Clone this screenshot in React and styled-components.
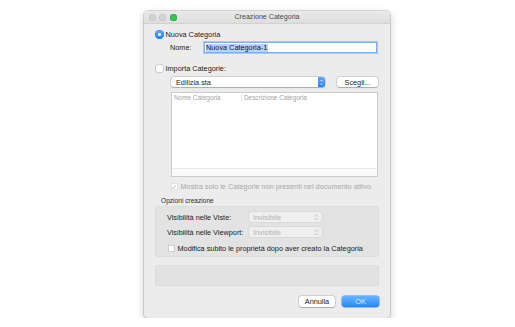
import React from "react";
import styled, { createGlobalStyle } from "styled-components";

const Global = createGlobalStyle`
  html, body { margin: 0; padding: 0; background: #ffffff; }
  body { font-family: "Liberation Sans", Arial, sans-serif; -webkit-font-smoothing: antialiased; }
  * { box-sizing: border-box; }
`;

const Page = styled.div`
  padding: 11px 0 0 144px;
`;

const Window = styled.div`
  width: 246px;
  height: 307px;
  background: #ececec;
  border-radius: 4px;
  box-shadow: 0 0 0 1px rgba(0, 0, 0, 0.13), 0 3px 9px rgba(0, 0, 0, 0.22);
  overflow: hidden;
  display: flex;
  flex-direction: column;
  font-size: 7.3px;
  color: #222;
`;

const TitleBar = styled.div`
  height: 13px;
  flex: none;
  display: grid;
  grid-template-columns: 1fr auto 1fr;
  align-items: center;
  background: linear-gradient(#e9e9e9, #dedede);
  border-bottom: 1px solid #d2d2d2;
`;

const Lights = styled.div`
  display: flex;
  gap: 3.4px;
  padding-left: 5px;
`;

const Light = styled.span`
  width: 7px;
  height: 7px;
  border-radius: 50%;
  background: ${(p) => (p.$on ? "#34c84a" : "#d3d3d3")};
  box-shadow: inset 0 0 0 0.5px ${(p) => (p.$on ? "#26a43a" : "#c2c2c2")};
`;

const Title = styled.div`
  font-size: 7.1px;
  color: #4a4a4a;
  line-height: 12px;
`;

const Content = styled.div`
  flex: 1;
  display: flex;
  flex-direction: column;
  padding: 0 11px 11px;
`;

const RadioRow = styled.div`
  display: flex;
  align-items: center;
  gap: 1.5px;
  height: 9px;
  margin-top: ${(p) => p.$mt}px;
`;

const Radio = styled.span`
  width: 9px;
  height: 9px;
  border-radius: 50%;
  flex: none;
  display: flex;
  align-items: center;
  justify-content: center;
  background: ${(p) => (p.$checked ? "linear-gradient(#66b0fb, #1580fc)" : "#ffffff")};
  box-shadow: ${(p) =>
    p.$checked
      ? "inset 0 0 0 0.5px #2a7fe6"
      : "inset 0 0 0 0.6px #a9a9a9, 0 0.5px 0.5px rgba(0,0,0,0.08)"};
  &::after {
    content: "";
    width: 3px;
    height: 3px;
    border-radius: 50%;
    background: #fff;
    display: ${(p) => (p.$checked ? "block" : "none")};
  }
`;

const FieldRow = styled.div`
  display: flex;
  align-items: center;
  height: 11px;
  margin-top: 3px;
  padding-left: 15px;
`;

const FieldLabel = styled.span`
  width: 34px;
  flex: none;
`;

const TextField = styled.div`
  width: 173px;
  height: 11px;
  background: #fff;
  border: 1px solid #7eaef3;
  box-shadow: 0 0 0 1px #a7c8f6;
  display: flex;
  align-items: center;
  padding-left: 0.5px;
`;

const Selected = styled.span`
  background: #b4d6fe;
  line-height: 8px;
  padding: 0 0.5px;
  color: #111;
`;

const ImportRow = styled.div`
  display: flex;
  align-items: center;
  margin-top: 4px;
  margin-left: 16px;
  height: 10px;
  gap: 12px;
`;

const Popup = styled.div`
  width: ${(p) => p.$w}px;
  height: 10px;
  flex: none;
  border-radius: 2.5px;
  background: ${(p) => (p.$disabled ? "#efefef" : "#ffffff")};
  box-shadow: ${(p) =>
    p.$disabled
      ? "0 0 0 0.6px #cfcfcf"
      : "0 0 0 0.5px rgba(0,0,0,0.22), 0 0.6px 0.8px rgba(0,0,0,0.18)"};
  display: flex;
  align-items: center;
  justify-content: space-between;
  padding-left: ${(p) => (p.$disabled ? 4 : 5)}px;
  color: ${(p) => (p.$disabled ? "#b3b3b3" : "#1e1e1e")};
  overflow: hidden;
`;

const Stepper = styled.span`
  width: 7px;
  height: 10px;
  flex: none;
  border-radius: 0 2.5px 2.5px 0;
  background: ${(p) => (p.$blue ? "linear-gradient(#5ea9fa, #1a7ef8)" : "transparent")};
  display: flex;
  align-items: center;
  justify-content: center;
  margin-right: ${(p) => (p.$blue ? 0 : 2)}px;
`;

const Button = styled.div`
  width: ${(p) => p.$w}px;
  height: ${(p) => p.$h}px;
  flex: none;
  border-radius: 2.5px;
  display: flex;
  align-items: center;
  justify-content: center;
  background: ${(p) => (p.$primary ? "linear-gradient(#6cb4fb, #2289fb)" : "#ffffff")};
  color: ${(p) => (p.$primary ? "#dcecff" : "#222")};
  box-shadow: ${(p) =>
    p.$primary
      ? "0 0 0 0.5px #3b8ef0"
      : "0 0 0 0.5px rgba(0,0,0,0.22), 0 0.6px 0.8px rgba(0,0,0,0.18)"};
`;

const Table = styled.div`
  margin-top: 5px;
  margin-left: 16px;
  width: 207px;
  height: 85px;
  background: #fff;
  border: 1px solid #cbcbcb;
  display: flex;
  flex-direction: column;
`;

const Header = styled.div`
  display: flex;
  height: 9px;
  flex: none;
  font-size: 6.4px;
  color: #a3a3a3;
`;

const HeadCell = styled.div`
  width: ${(p) => (p.$w ? `${p.$w}px` : "auto")};
  flex: ${(p) => (p.$w ? "none" : 1)};
  padding-left: 2px;
  line-height: 9px;
  border-right: ${(p) => (p.$w ? "1px solid #e3e3e3" : "none")};
  margin: 1px 0;
  line-height: 7px;
`;

const TableBody = styled.div`
  flex: 1;
`;

const ScrollStrip = styled.div`
  height: 8px;
  flex: none;
  background: #fafafa;
  border-top: 1px solid #ebebeb;
`;

const CheckRow = styled.div`
  display: flex;
  align-items: center;
  gap: 3px;
  height: 7px;
  margin-top: ${(p) => p.$mt}px;
  margin-left: ${(p) => p.$ml}px;
  color: ${(p) => (p.$disabled ? "#a8a8a8" : "#222")};
`;

const Check = styled.span`
  width: 6.5px;
  height: 6.5px;
  flex: none;
  border-radius: 1.3px;
  background: #fff;
  box-shadow: inset 0 0 0 0.6px ${(p) => (p.$disabled ? "#cacaca" : "#a8a8a8")};
  display: flex;
  align-items: center;
  justify-content: center;
`;

const SectionLabel = styled.div`
  margin-top: 7px;
  height: 8px;
  line-height: 8px;
  padding-left: 6px;
  font-size: 6.6px;
  color: #2a2a2a;
`;

const Group = styled.div`
  margin-top: 1px;
  height: 51px;
  background: #e3e3e3;
  border: 1px solid #dcdcdc;
  border-radius: 3px;
  padding: 5px 0 0 11px;
  display: flex;
  flex-direction: column;
`;

const OptionRow = styled.div`
  display: flex;
  align-items: center;
  height: 10px;
  margin-top: ${(p) => p.$mt}px;
`;

const OptionLabel = styled.span`
  width: 82px;
  flex: none;
  white-space: nowrap;
`;

const StatusBox = styled.div`
  margin-top: 8px;
  height: 21px;
  background: #e2e2e2;
  border: 1px solid #dbdbdb;
  border-radius: 2px;
`;

const ButtonRow = styled.div`
  margin-top: 10px;
  display: flex;
  justify-content: flex-end;
  gap: 7px;
`;

const UpDown = ({ color }) => (
  <svg width="5" height="7" viewBox="0 0 5 7">
    <path d="M1 2.6 L2.5 1.1 L4 2.6" fill="none" stroke={color} strokeWidth="0.8" />
    <path d="M1 4.4 L2.5 5.9 L4 4.4" fill="none" stroke={color} strokeWidth="0.8" />
  </svg>
);

const Tick = ({ color }) => (
  <svg width="6" height="6" viewBox="0 0 6 6">
    <path d="M1.2 3.1 L2.5 4.4 L4.9 1.3" fill="none" stroke={color} strokeWidth="0.9" />
  </svg>
);

export default function App() {
  return (
    <>
      <Global />
      <Page>
        <Window>
          <TitleBar>
            <Lights>
              <Light />
              <Light />
              <Light $on />
            </Lights>
            <Title>Creazione Categoria</Title>
            <span />
          </TitleBar>
          <Content>
            <RadioRow $mt={6}>
              <Radio $checked />
              <span>Nuova Categoria</span>
            </RadioRow>
            <FieldRow>
              <FieldLabel>Nome:</FieldLabel>
              <TextField>
                <Selected>Nuova Categoria-1</Selected>
              </TextField>
            </FieldRow>
            <RadioRow $mt={11}>
              <Radio />
              <span>Importa Categorie:</span>
            </RadioRow>
            <ImportRow>
              <Popup $w={154}>
                <span>Edilizia.sta</span>
                <Stepper $blue>
                  <UpDown color="#ffffff" />
                </Stepper>
              </Popup>
              <Button $w={41} $h={10}>Scegli...</Button>
            </ImportRow>
            <Table>
              <Header>
                <HeadCell $w={70}>Nome Categoria</HeadCell>
                <HeadCell>Descrizione Categoria</HeadCell>
              </Header>
              <TableBody />
              <ScrollStrip />
            </Table>
            <CheckRow $mt={6} $ml={16} $disabled>
              <Check $disabled>
                <Tick color="#b0b0b0" />
              </Check>
              <span>Mostra solo le Categorie non presenti nel documento attivo</span>
            </CheckRow>
            <SectionLabel>Opzioni creazione</SectionLabel>
            <Group>
              <OptionRow $mt={0}>
                <OptionLabel>Visibilità nelle Viste:</OptionLabel>
                <Popup $w={73} $disabled>
                  <span>Invisibile</span>
                  <Stepper>
                    <UpDown color="#a9a9a9" />
                  </Stepper>
                </Popup>
              </OptionRow>
              <OptionRow $mt={5}>
                <OptionLabel>Visibilità nelle Viewport:</OptionLabel>
                <Popup $w={73} $disabled>
                  <span>Invisibile</span>
                  <Stepper>
                    <UpDown color="#a9a9a9" />
                  </Stepper>
                </Popup>
              </OptionRow>
              <CheckRow $mt={8} $ml={1}>
                <Check />
                <span>Modifica subito le proprietà dopo aver creato la Categoria</span>
              </CheckRow>
            </Group>
            <StatusBox />
            <ButtonRow>
              <Button $w={36} $h={11}>Annulla</Button>
              <Button $w={37} $h={11} $primary>OK</Button>
            </ButtonRow>
          </Content>
        </Window>
      </Page>
    </>
  );
}
